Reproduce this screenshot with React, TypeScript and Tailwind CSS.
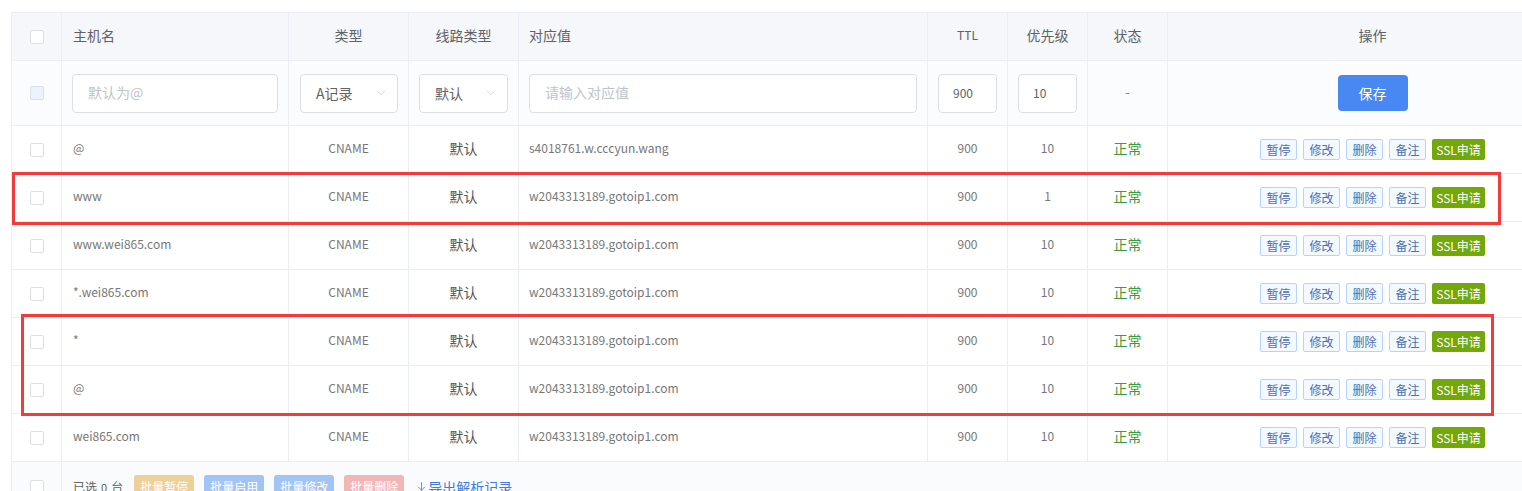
import React from 'react';
import { ChevronDown, ArrowDownToLine } from 'lucide-react';

type Rec = { host: string; value: string; prio: string };

const records: Rec[] = [
  { host: '@', value: 's4018761.w.cccyun.wang', prio: '10' },
  { host: 'www', value: 'w2043313189.gotoip1.com', prio: '1' },
  { host: 'www.wei865.com', value: 'w2043313189.gotoip1.com', prio: '10' },
  { host: '*.wei865.com', value: 'w2043313189.gotoip1.com', prio: '10' },
  { host: '*', value: 'w2043313189.gotoip1.com', prio: '10' },
  { host: '@', value: 'w2043313189.gotoip1.com', prio: '10' },
  { host: 'wei865.com', value: 'w2043313189.gotoip1.com', prio: '10' },
];

const cell = 'shrink-0 h-full flex items-center border-r border-[#ebeef5]';

function Checkbox({ disabled }: { disabled?: boolean }) {
  return (
    <span
      className={
        'block w-[14px] h-[14px] rounded-[2px] border border-[#dcdfe6] ' +
        (disabled ? 'bg-[#edf2fc]' : 'bg-white')
      }
    />
  );
}

function ActionButton({ label }: { label: string }) {
  return (
    <span className="w-[37px] h-[21px] flex items-center justify-center rounded-[2px] border border-[#b3d4fc] bg-[#f4f9ff] text-[12px] text-[#4d6fa8]">
      {label}
    </span>
  );
}

function Select({ label, width }: { label: string; width: string }) {
  return (
    <div
      className={
        'h-[39px] rounded-[4px] border border-[#dcdfe6] bg-white flex items-center justify-between pl-[15px] pr-[9px] text-[14px] text-[#606266] ' +
        width
      }
    >
      <span>{label}</span>
      <ChevronDown size={14} strokeWidth={1} className="text-[#b4b8bf]" />
    </div>
  );
}

export default function App() {
  return (
    <div className="relative w-[1522px] h-[491px] overflow-hidden bg-white pl-[11px] pt-[12px] font-['Noto_Sans_CJK_SC',sans-serif] text-[#777]">
      <div className="w-[1567px] border-l border-t border-[#ebeef5]">
        {/* header */}
        <div className="flex h-[48px] border-b border-[#ebeef5] bg-[#f5f7fb] text-[14px] text-[#606266]">
          <div className={cell + ' w-[50px] justify-center'}>
            <Checkbox />
          </div>
          <div className={cell + ' w-[227px] pl-[11px] pb-[3px]'}>主机名</div>
          <div className={cell + ' w-[120px] justify-center pb-[3px]'}>类型</div>
          <div className={cell + ' w-[110px] justify-center pb-[3px]'}>线路类型</div>
          <div className={cell + ' w-[409px] pl-[10px] pb-[3px]'}>对应值</div>
          <div className={cell + ' w-[80px] justify-center text-[12px] pb-[3px]'}>TTL</div>
          <div className={cell + ' w-[80px] justify-center pb-[3px]'}>优先级</div>
          <div className={cell + ' w-[80px] justify-center pb-[3px]'}>状态</div>
          <div className={cell + ' w-[410px] justify-center pb-[3px]'}>操作</div>
        </div>

        {/* input row */}
        <div className="flex h-[65px] border-b border-[#ebeef5] bg-[#fbfcfe] text-[14px]">
          <div className={cell + ' w-[50px] justify-center'}>
            <Checkbox disabled />
          </div>
          <div className={cell + ' w-[227px] px-[10px]'}>
            <div className="w-full h-[39px] rounded-[4px] border border-[#dcdfe6] bg-white flex items-center pl-[15px] pb-[2px] text-[#c0c4cc]">
              默认为@
            </div>
          </div>
          <div className={cell + ' w-[120px] pl-[11px]'}>
            <Select label="A记录" width="w-[98px]" />
          </div>
          <div className={cell + ' w-[110px] pl-[10px]'}>
            <Select label="默认" width="w-[89px]" />
          </div>
          <div className={cell + ' w-[409px] px-[10px]'}>
            <div className="w-full h-[39px] rounded-[4px] border border-[#dcdfe6] bg-white flex items-center pl-[15px] pb-[2px] text-[#c0c4cc]">
              请输入对应值
            </div>
          </div>
          <div className={cell + ' w-[80px] pl-[10px]'}>
            <div className="w-[59px] h-[39px] rounded-[4px] border border-[#dcdfe6] bg-white flex items-center pl-[14px] text-[12px] text-[#606266]">
              900
            </div>
          </div>
          <div className={cell + ' w-[80px] pl-[10px]'}>
            <div className="w-[59px] h-[39px] rounded-[4px] border border-[#dcdfe6] bg-white flex items-center pl-[14px] text-[12px] text-[#606266]">
              10
            </div>
          </div>
          <div className={cell + ' w-[80px] justify-center text-[#888] pb-[3px]'}>-</div>
          <div className={cell + ' w-[410px] justify-center'}>
            <span className="w-[70px] h-[36px] rounded-[4px] bg-[#4788f2] text-white flex items-center justify-center text-[14px]">
              保存
            </span>
          </div>
        </div>

        {/* records */}
        {records.map((r, i) => (
          <div key={i} className="flex h-[48px] border-b border-[#ebeef5] bg-white">
            <div className={cell + ' w-[50px] justify-center'}>
              <Checkbox />
            </div>
            <div className={cell + ' w-[227px] pl-[11px] pb-[3px] text-[12px]'}>{r.host}</div>
            <div className={cell + ' w-[120px] justify-center pb-[3px] text-[12px]'}>CNAME</div>
            <div className={cell + ' w-[110px] justify-center pb-[3px] text-[14px] text-[#555]'}>默认</div>
            <div className={cell + ' w-[409px] pl-[10px] pb-[3px] text-[12px]'}>{r.value}</div>
            <div className={cell + ' w-[80px] justify-center pb-[3px] text-[12px]'}>900</div>
            <div className={cell + ' w-[80px] justify-center pb-[3px] text-[12px]'}>{r.prio}</div>
            <div className={cell + ' w-[80px] justify-center pb-[3px] text-[14px] text-[#3a9b3f]'}>正常</div>
            <div className={cell + ' w-[410px] justify-center gap-[6px]'}>
              <ActionButton label="暂停" />
              <ActionButton label="修改" />
              <ActionButton label="删除" />
              <ActionButton label="备注" />
              <span className="w-[53px] h-[21px] flex items-center justify-center rounded-[2px] bg-[#72a80a] text-[12px] text-white">
                SSL申请
              </span>
            </div>
          </div>
        ))}

        {/* footer */}
        <div className="flex h-[50px] bg-[#fafbfd]">
          <div className={cell + ' w-[50px] justify-center'}>
            <Checkbox />
          </div>
          <div className="flex items-center h-full pl-[11px] text-[12px] text-[#606266]">
            <span>已选</span>
            <span className="text-[11px] mx-[4px]">0</span>
            <span>台</span>
            <span className="ml-[11px] w-[60px] h-[24px] rounded-[3px] bg-[#edcf98] text-white text-[12px] flex items-center justify-center">
              批量暂停
            </span>
            <span className="ml-[10px] w-[60px] h-[24px] rounded-[3px] bg-[#a2c4f5] text-white text-[12px] flex items-center justify-center">
              批量启用
            </span>
            <span className="ml-[10px] w-[60px] h-[24px] rounded-[3px] bg-[#a2c4f5] text-white text-[12px] flex items-center justify-center">
              批量修改
            </span>
            <span className="ml-[10px] w-[60px] h-[24px] rounded-[3px] bg-[#f1b6b6] text-white text-[12px] flex items-center justify-center">
              批量删除
            </span>
            <span className="ml-[11px] flex items-center text-[14px] text-[#3f7be6]">
              <ArrowDownToLine size={13} strokeWidth={1.5} />
              导出解析记录
            </span>
          </div>
        </div>
      </div>

      {/* annotation boxes */}
      <div className="absolute left-[12px] top-[172px] w-[1489px] h-[53px] border-[3px] border-[#f53a3a] pointer-events-none" />
      <div className="absolute left-[21px] top-[314px] w-[1473px] h-[102px] border-[3px] border-[#f53a3a] pointer-events-none" />
    </div>
  );
}
